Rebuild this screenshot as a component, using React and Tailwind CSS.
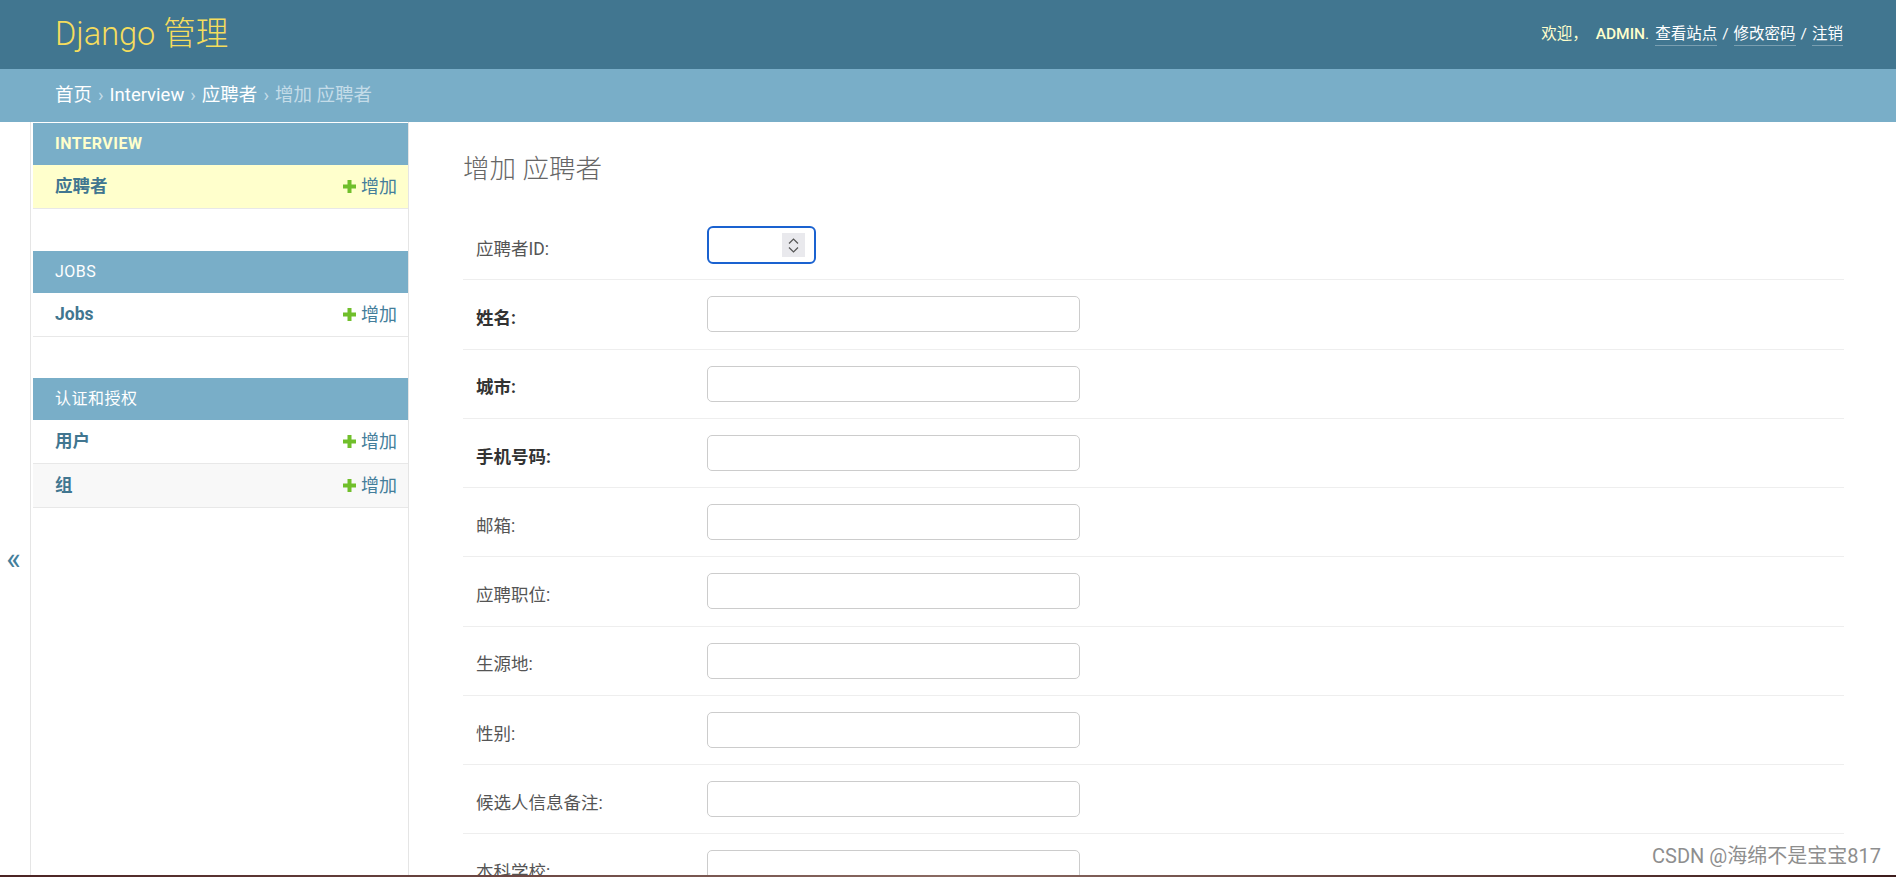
import React from 'react'

const FONT = { fontFamily: 'Roboto, "Noto Sans CJK SC", "Liberation Sans", sans-serif' }

const MODULES = [
  { name: 'Interview', current: true, rows: [{ label: '应聘者', active: true }] },
  { name: 'Jobs', rows: [{ label: 'Jobs' }] },
  { name: '认证和授权', rows: [{ label: '用户' }, { label: '组', alt: true }] },
]

const FIELDS = [
  { label: '应聘者ID', kind: 'number' },
  { label: '姓名', required: true },
  { label: '城市', required: true },
  { label: '手机号码', required: true },
  { label: '邮箱' },
  { label: '应聘职位' },
  { label: '生源地' },
  { label: '性别' },
  { label: '候选人信息备注' },
  { label: '本科学校' },
  { label: '研究生学校' },
  { label: '博士学校' },
]

function PlusIcon() {
  return (
    <svg width="13" height="13" viewBox="0 0 13 13" className="shrink-0">
      <rect x="4.5" y="0" width="4" height="13" fill="#70bf2b" />
      <rect x="0" y="4.5" width="13" height="4" fill="#70bf2b" />
    </svg>
  )
}

function Header() {
  return (
    <div className="h-[69px] bg-[#417690] flex items-center justify-between pl-[55px] pr-[53px]">
      <span className="text-[32.5px] font-light text-[#f5dd5d] leading-none">Django 管理</span>
      <div className="text-[15.5px] text-[#ffc] flex items-center">
        <span>欢迎，</span>
        <span className="ml-[8px] font-medium">ADMIN</span>
        <span>.</span>
        <span className="ml-[6px] text-white border-b border-white/30 leading-[21px]">查看站点</span>
        <span className="mx-[5px] text-white">/</span>
        <span className="text-white border-b border-white/30 leading-[21px]">修改密码</span>
        <span className="mx-[5px] text-white">/</span>
        <span className="text-white border-b border-white/30 leading-[21px]">注销</span>
      </div>
    </div>
  )
}

function Breadcrumbs() {
  return (
    <div className="h-[53px] bg-[#79aec8] flex items-center pl-[55px] text-[18.5px] text-white">
      <span>首页</span>
      <span className="mx-[6px] text-[#c4dce8]">›</span>
      <span>Interview</span>
      <span className="mx-[6px] text-[#c4dce8]">›</span>
      <span>应聘者</span>
      <span className="mx-[6px] text-[#c4dce8]">›</span>
      <span className="text-[#c4dce8]">增加 应聘者</span>
    </div>
  )
}

function Sidebar() {
  return (
    <div className="w-[378px] shrink-0 border-r border-[#e5e5e5] pl-[2px] pt-px">
      {MODULES.map((m) => (
        <div key={m.name} className="mb-[41.5px]">
          <div
            className={`h-[42px] bg-[#79aec8] flex items-center pl-[22px] text-[16px] uppercase tracking-[0.5px] ${
              m.current ? 'font-bold text-[#ffc]' : 'text-white'
            }`}
          >
            {m.name}
          </div>
          {m.rows.map((r) => (
            <div
              key={r.label}
              className={`h-[44px] border-b border-[#e8e8e8] flex items-center justify-between pl-[22px] pr-[11px] text-[17.5px] ${
                r.active ? 'bg-[#ffc]' : r.alt ? 'bg-[#f8f8f8]' : 'bg-white'
              }`}
            >
              <span className="font-bold text-[#417690]">{r.label}</span>
              <span className="flex items-center gap-[5px] text-[#447e9b] text-[18px]">
                <PlusIcon />
                增加
              </span>
            </div>
          ))}
        </div>
      ))}
    </div>
  )
}

function NumberInput() {
  return (
    <div className="h-[38px] -my-px w-[109px] border-2 border-[#1a62d0] rounded-[6px] bg-white flex items-center justify-end pr-[9px]">
      <div className="w-[23px] h-[24px] bg-[#e9e9ed] flex flex-col items-center justify-center gap-[3px]">
        <svg width="11" height="6" viewBox="0 0 11 6">
          <path d="M1 5.5 L5.5 1 L10 5.5" fill="none" stroke="#555" strokeWidth="1.2" />
        </svg>
        <svg width="11" height="6" viewBox="0 0 11 6">
          <path d="M1 0.5 L5.5 5 L10 0.5" fill="none" stroke="#555" strokeWidth="1.2" />
        </svg>
      </div>
    </div>
  )
}

function FormRow({ field }) {
  return (
    <div className="flex items-center border-b border-[#eee] pt-[16px] pb-[16.25px] pl-[13px]">
      <label
        className={`w-[231px] shrink-0 pt-[8px] text-[17.5px] ${
          field.required ? 'font-bold text-[#333]' : 'text-[#555]'
        }`}
      >
        {field.label}:
      </label>
      {field.kind === 'number' ? (
        <NumberInput />
      ) : (
        <div className="h-[36px] w-[373px] border border-[#ccc] rounded-[5px] bg-white" />
      )}
    </div>
  )
}

export default function App() {
  return (
    <div className="h-[877px] overflow-hidden bg-white relative" style={FONT}>
      <Header />
      <Breadcrumbs />
      <div className="flex">
        <div className="w-[31px] shrink-0 border-r border-[#e5e5e5] h-[877px] flex items-center justify-center">
          <span className="text-[31px] leading-none text-[#447e9b] -mt-[4px] -ml-[3px]">«</span>
        </div>
        <Sidebar />
        <div className="flex-1 pl-[54px] pr-[52px] pt-[30px]">
          <h1 className="h-[34px] leading-[34px] text-[26.5px] font-light text-[#666] mb-[25px]">增加 应聘者</h1>
          {FIELDS.map((f) => (
            <FormRow key={f.label} field={f} />
          ))}
        </div>
      </div>
      <div className="absolute right-[15px] bottom-[11px] text-[20px] text-[#8e8e8e] leading-none">
        CSDN @海绵不是宝宝817
      </div>
      <div className="absolute left-0 right-0 bottom-0 h-[2px] bg-gradient-to-r from-[#4a2323] via-[#8a6a62] to-[#3d1c1c]" />
    </div>
  )
}
